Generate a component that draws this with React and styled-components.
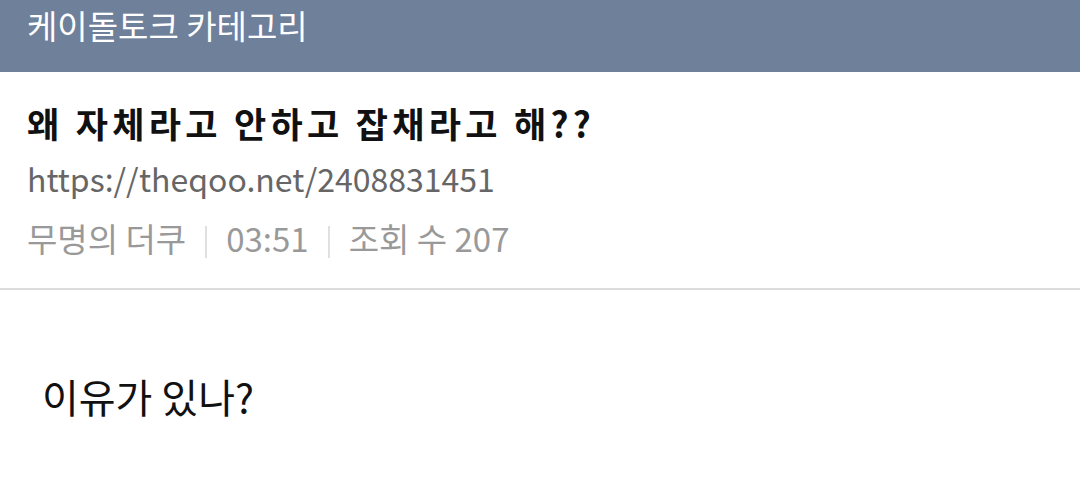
import React from "react";
import styled, { createGlobalStyle } from "styled-components";

const Global = createGlobalStyle`
  html, body { margin: 0; padding: 0; background: #fff; }
  body { font-family: "Noto Sans CJK KR", "Noto Sans", sans-serif; }
`;

const Page = styled.div`
  width: 1080px;
  height: 480px;
  overflow: hidden;
  background: #fff;
`;

const TopBar = styled.div`
  height: 72px;
  background: #6f809b;
  display: flex;
  align-items: flex-start;
  padding: 0 0 0 27px;
  box-sizing: border-box;
`;

const TopTitle = styled.div`
  color: #fff;
  font-size: 33px;
  line-height: 50px;
`;

const Head = styled.div`
  padding: 26px 27px 26px;
  display: flex;
  flex-direction: column;
  border-bottom: 2px solid #dcdcdc;
`;

const Title = styled.h1`
  margin: 1px 0 0;
  font-size: 35px;
  font-weight: 700;
  line-height: 48px;
  color: #111;
  letter-spacing: 4.3px;
`;

const Url = styled.div`
  margin-top: 8px;
  font-size: 32px;
  line-height: 46px;
  color: #666;
`;

const Meta = styled.div`
  margin-top: 13px;
  display: flex;
  align-items: center;
  font-size: 33px;
  line-height: 48px;
  color: #999;
`;

const Sep = styled.span`
  width: 2px;
  height: 32px;
  background: #e0e0e0;
  margin: 7px 19px 0;
`;

const Body = styled.div`
  padding: 77px 42px 0;
  font-size: 40px;
  line-height: 58px;
  color: #111;
`;

export default function App() {
  return (
    <Page>
      <Global />
      <TopBar>
        <TopTitle>케이돌토크 카테고리</TopTitle>
      </TopBar>
      <Head>
        <Title>왜 자체라고 안하고 잡채라고 해??</Title>
        <Url>https://theqoo.net/2408831451</Url>
        <Meta>
          <span>무명의 더쿠</span>
          <Sep />
          <span>03:51</span>
          <Sep />
          <span>조회 수 207</span>
        </Meta>
      </Head>
      <Body>이유가 있나?</Body>
    </Page>
  );
}
